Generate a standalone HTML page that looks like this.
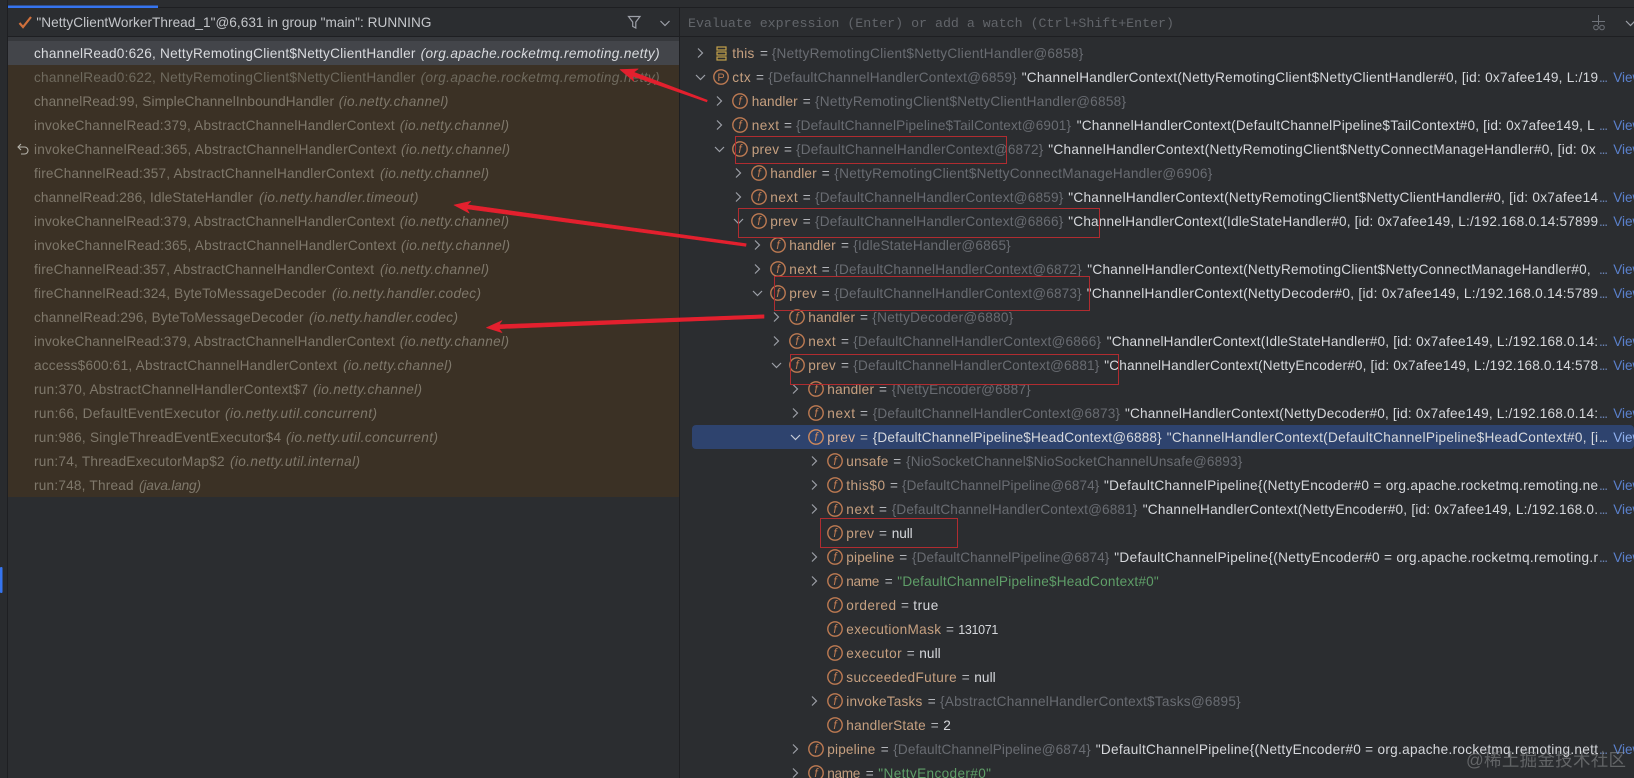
<!DOCTYPE html>
<html><head><meta charset="utf-8">
<style>
html,body{margin:0;padding:0;background:#2b2d30;width:1634px;height:778px;overflow:hidden}
svg{display:block;font-family:"Liberation Sans","Noto Sans CJK SC",sans-serif;font-size:13.6px;filter:blur(.35px)}
.t{fill:#7f786b}.i{fill:#7f786b;font-style:italic}
.w{fill:#d9dbdf}.wi{fill:#d9dbdf;font-style:italic}
.h{fill:#c4c6ca}
.n{fill:#c6a080}.e{fill:#b4b6bb}.g{fill:#696c72}.s{fill:#d6d8dc}.d{fill:#6a83b5}.v{fill:#5a80cc}.u{fill:#5f9e68}
.o{fill:none;stroke:#bd7a52;stroke-width:1.4}
.f{fill:#bd7a52;font-size:12px;text-anchor:middle;font-style:italic}
.c{fill:none;stroke:#9da0a8;stroke-width:1.2}
.b{fill:none;stroke:#b02c30;stroke-width:1}
.m{font-family:"Liberation Mono",monospace;fill:#62656a;font-size:13.3px}
.a{fill:#e3202e;stroke:#e3202e;stroke-width:.6;stroke-linejoin:round}
</style></head><body>
<svg width="1634" height="778" viewBox="0 0 1634 778" xmlns="http://www.w3.org/2000/svg">
<rect width="1634" height="778" fill="#2b2d30"/>
<rect x="0" y="0" width="7" height="778" fill="#292b2e"/>
<rect x="7" y="0" width="1" height="778" fill="#1e1f22"/>
<rect x="0" y="567" width="2.5" height="26" rx="1" fill="#3574f0"/>
<rect x="8" y="5.5" width="150" height="2.5" fill="#3574f0"/>
<rect x="158" y="7" width="1476" height="1" fill="#1e1f22"/>
<rect x="8" y="36" width="1626" height="1" fill="#1e1f22"/>
<rect x="8" y="37" width="671" height="4" fill="#36383c"/>
<rect x="8" y="41" width="671" height="24" fill="#43454a"/>
<rect x="8" y="65" width="671" height="432" fill="#3b3125"/>
<rect x="679" y="8" width="1" height="770" fill="#1e1f22"/>
<rect x="692" y="425" width="942" height="24" rx="4" fill="#2e436e"/>

<!-- left header -->
<path d="M19.5 23l3.5 4 8-10" fill="none" stroke="#d0703c" stroke-width="2.2"/>
<text x="36.4" y="27" class="h" textLength="395">"NettyClientWorkerThread_1"@6,631 in group "main": RUNNING</text>
<path d="M628.5 16.5h11.5l-4.2 5.6v5.900l-3.100-1.600v-4.300z" class="c"/>
<path d="M660.5 21l4.500 4.500 4.500-4.500" class="c"/>
<!-- right header -->
<text x="688" y="27" class="m" textLength="486">Evaluate expression (Enter) or add a watch (Ctrl+Shift+Enter)</text>
<path d="M1598.500 15v10M1592 21.500h13" fill="none" stroke="#6f737a"/>
<circle cx="1596" cy="27.500" r="2.300" fill="none" stroke="#6f737a"/><circle cx="1602" cy="27.500" r="2.300" fill="none" stroke="#6f737a"/>
<path d="M1626 21l4.500 4.500 4.500-4.500" class="c"/>

<!-- stack frames -->
<text x="34" y="58" class="w" textLength="381.4">channelRead0:626, NettyRemotingClient$NettyClientHandler</text><text x="420.6" y="58" class="wi" textLength="239">(org.apache.rocketmq.remoting.netty)</text>
<text x="34" y="82" class="t" textLength="381.4" style="fill:#6f6a5e">channelRead0:622, NettyRemotingClient$NettyClientHandler</text><text x="420.6" y="82" class="i" textLength="239" style="fill:#6f6a5e">(org.apache.rocketmq.remoting.netty)</text>
<text x="34" y="106" class="t" textLength="300">channelRead:99, SimpleChannelInboundHandler</text><text x="338.7" y="106" class="i" textLength="109.7">(io.netty.channel)</text>
<text x="34" y="130" class="t" textLength="360.6">invokeChannelRead:379, AbstractChannelHandlerContext</text><text x="399.8" y="130" class="i" textLength="109.2">(io.netty.channel)</text>
<path d="M18 147h6.500a3.500 3.500 0 0 1 0 7h-3.500M21 144l-3 3 3 3" fill="none" stroke="#b5b2aa" stroke-width="1.100"/>
<text x="34" y="154" class="t" textLength="362">invokeChannelRead:365, AbstractChannelHandlerContext</text><text x="401" y="154" class="i" textLength="109">(io.netty.channel)</text>
<text x="34" y="178" class="t" textLength="340">fireChannelRead:357, AbstractChannelHandlerContext</text><text x="380" y="178" class="i" textLength="109">(io.netty.channel)</text>
<text x="34" y="202" class="t" textLength="219">channelRead:286, IdleStateHandler</text><text x="259" y="202" class="i" textLength="159.500">(io.netty.handler.timeout)</text>
<text x="34" y="226" class="t" textLength="360.6">invokeChannelRead:379, AbstractChannelHandlerContext</text><text x="399.8" y="226" class="i" textLength="109.2">(io.netty.channel)</text>
<text x="34" y="250" class="t" textLength="362">invokeChannelRead:365, AbstractChannelHandlerContext</text><text x="401" y="250" class="i" textLength="109">(io.netty.channel)</text>
<text x="34" y="274" class="t" textLength="340">fireChannelRead:357, AbstractChannelHandlerContext</text><text x="380" y="274" class="i" textLength="109">(io.netty.channel)</text>
<text x="34" y="298" class="t" textLength="292">fireChannelRead:324, ByteToMessageDecoder</text><text x="332" y="298" class="i" textLength="149">(io.netty.handler.codec)</text>
<text x="34" y="322" class="t" textLength="269.500">channelRead:296, ByteToMessageDecoder</text><text x="309" y="322" class="i" textLength="149">(io.netty.handler.codec)</text>
<text x="34" y="346" class="t" textLength="360.6">invokeChannelRead:379, AbstractChannelHandlerContext</text><text x="399.8" y="346" class="i" textLength="109.2">(io.netty.channel)</text>
<text x="34" y="370" class="t" textLength="303">access$600:61, AbstractChannelHandlerContext</text><text x="343" y="370" class="i" textLength="109">(io.netty.channel)</text>
<text x="34" y="394" class="t" textLength="274">run:370, AbstractChannelHandlerContext$7</text><text x="313" y="394" class="i" textLength="109">(io.netty.channel)</text>
<text x="34" y="418" class="t" textLength="186">run:66, DefaultEventExecutor</text><text x="225" y="418" class="i" textLength="152">(io.netty.util.concurrent)</text>
<text x="34" y="442" class="t" textLength="247">run:986, SingleThreadEventExecutor$4</text><text x="286" y="442" class="i" textLength="152">(io.netty.util.concurrent)</text>
<text x="34" y="466" class="t" textLength="190.6">run:74, ThreadExecutorMap$2</text><text x="230" y="466" class="i" textLength="130">(io.netty.util.internal)</text>
<text x="34" y="490" class="t" textLength="99.6">run:748, Thread</text><text x="139" y="490" class="i" textLength="62">(java.lang)</text>

<!-- variables -->
<path d="M698 48.500l4.500 4.500-4.500 4.500" class="c"/>
<rect x="717" y="47" width="9" height="3" fill="none" stroke="#c4a24a" stroke-width="1.200"/><rect x="717" y="52" width="9" height="3" fill="none" stroke="#c4a24a" stroke-width="1.200"/><rect x="717" y="57" width="9" height="3" fill="none" stroke="#c4a24a" stroke-width="1.200"/>
<text x="732.3" y="58" class="n" textLength="22">this</text><text x="760" y="58" class="e">=</text><text x="771.7" y="58" class="g" textLength="311.6">{NettyRemotingClient$NettyClientHandler@6858}</text>

<path d="M696 75l4.500 4.500 4.500-4.500" class="c"/><circle cx="721" cy="77" r="7.200" class="o"/><text x="721" y="81" class="f" style="font-style:normal;font-size:11px">P</text>
<text x="732.3" y="82" class="n" textLength="18.4">ctx</text><text x="756" y="82" class="e">=</text><text x="768.3" y="82" class="g" textLength="248.4">{DefaultChannelHandlerContext@6859}</text><text x="1021.7" y="82" class="s" textLength="576.3">"ChannelHandlerContext(NettyRemotingClient$NettyClientHandler#0, [id: 0x7afee149, L:/19</text><text x="1599" y="82" class="d" textLength="9">...</text><text x="1613.300" y="82" class="v" textLength="29">View</text>

<path d="M717 96.500l4.500 4.500-4.500 4.500" class="c"/><circle cx="740" cy="101" r="7.200" class="o"/><text x="740" y="105" class="f">f</text>
<text x="751.7" y="106" class="n" textLength="46">handler</text><text x="802.7" y="106" class="e">=</text><text x="815" y="106" class="g" textLength="311">{NettyRemotingClient$NettyClientHandler@6858}</text>

<path d="M717 120.500l4.500 4.500-4.500 4.500" class="c"/><circle cx="740" cy="125" r="7.200" class="o"/><text x="740" y="129" class="f">f</text>
<text x="751.7" y="130" class="n" textLength="27.300">next</text><text x="784" y="130" class="e">=</text><text x="796" y="130" class="g" textLength="275">{DefaultChannelPipeline$TailContext@6901}</text><text x="1076.7" y="130" class="s" textLength="518">"ChannelHandlerContext(DefaultChannelPipeline$TailContext#0, [id: 0x7afee149, L</text><text x="1599" y="130" class="d" textLength="9">...</text><text x="1613.300" y="130" class="v" textLength="29">View</text>

<path d="M715 147l4.500 4.500 4.500-4.500" class="c"/><circle cx="740" cy="149" r="7.200" class="o"/><text x="740" y="153" class="f">f</text>
<text x="751.7" y="154" class="n" textLength="27.300">prev</text><text x="784" y="154" class="e">=</text><text x="796" y="154" class="g" textLength="247.300">{DefaultChannelHandlerContext@6872}</text><text x="1048.3" y="154" class="s" textLength="547.400">"ChannelHandlerContext(NettyRemotingClient$NettyConnectManageHandler#0, [id: 0x</text><text x="1599" y="154" class="d" textLength="9">...</text><text x="1613.300" y="154" class="v" textLength="29">View</text>

<path d="M736 168.500l4.500 4.500-4.500 4.500" class="c"/><circle cx="759" cy="173" r="7.200" class="o"/><text x="759" y="177" class="f">f</text>
<text x="770.3" y="178" class="n" textLength="46.400">handler</text><text x="821.7" y="178" class="e">=</text><text x="834.3" y="178" class="g" textLength="378">{NettyRemotingClient$NettyConnectManageHandler@6906}</text>

<path d="M736 192.500l4.500 4.500-4.500 4.500" class="c"/><circle cx="759" cy="197" r="7.200" class="o"/><text x="759" y="201" class="f">f</text>
<text x="770.3" y="202" class="n" textLength="27.400">next</text><text x="802.700" y="202" class="e">=</text><text x="815" y="202" class="g" textLength="248.300">{DefaultChannelHandlerContext@6859}</text><text x="1068.3" y="202" class="s" textLength="529.700">"ChannelHandlerContext(NettyRemotingClient$NettyClientHandler#0, [id: 0x7afee14</text><text x="1599" y="202" class="d" textLength="9">...</text><text x="1613.300" y="202" class="v" textLength="29">View</text>

<path d="M734 219l4.500 4.500 4.500-4.500" class="c"/><circle cx="759" cy="221" r="7.200" class="o"/><text x="759" y="225" class="f">f</text>
<text x="770.3" y="226" class="n" textLength="27.400">prev</text><text x="802.700" y="226" class="e">=</text><text x="815" y="226" class="g" textLength="248.300">{DefaultChannelHandlerContext@6866}</text><text x="1068.3" y="226" class="s" textLength="529.700">"ChannelHandlerContext(IdleStateHandler#0, [id: 0x7afee149, L:/192.168.0.14:57899</text><text x="1599" y="226" class="d" textLength="9">...</text><text x="1613.300" y="226" class="v" textLength="29">View</text>

<path d="M755 240.500l4.500 4.500-4.500 4.500" class="c"/><circle cx="778" cy="245" r="7.200" class="o"/><text x="778" y="249" class="f">f</text>
<text x="789.3" y="250" class="n" textLength="46.400">handler</text><text x="841" y="250" class="e">=</text><text x="853.3" y="250" class="g" textLength="157.400">{IdleStateHandler@6865}</text>

<path d="M755 264.500l4.500 4.500-4.500 4.500" class="c"/><circle cx="778" cy="269" r="7.200" class="o"/><text x="778" y="273" class="f">f</text>
<text x="789.3" y="274" class="n" textLength="27.400">next</text><text x="821.700" y="274" class="e">=</text><text x="834.3" y="274" class="g" textLength="247.400">{DefaultChannelHandlerContext@6872}</text><text x="1087.3" y="274" class="s" textLength="503.400">"ChannelHandlerContext(NettyRemotingClient$NettyConnectManageHandler#0,</text><text x="1599" y="274" class="d" textLength="9">...</text><text x="1613.300" y="274" class="v" textLength="29">View</text>

<path d="M753 291l4.500 4.500 4.500-4.500" class="c"/><circle cx="778" cy="293" r="7.200" class="o"/><text x="778" y="297" class="f">f</text>
<text x="789.3" y="298" class="n" textLength="27.400">prev</text><text x="821.700" y="298" class="e">=</text><text x="834.3" y="298" class="g" textLength="247.400">{DefaultChannelHandlerContext@6873}</text><text x="1086.700" y="298" class="s" textLength="511.300">"ChannelHandlerContext(NettyDecoder#0, [id: 0x7afee149, L:/192.168.0.14:5789</text><text x="1599" y="298" class="d" textLength="9">...</text><text x="1613.300" y="298" class="v" textLength="29">View</text>

<path d="M774 312.500l4.500 4.500-4.500 4.500" class="c"/><circle cx="797" cy="317" r="7.200" class="o"/><text x="797" y="321" class="f">f</text>
<text x="808.3" y="322" class="n" textLength="46.700">handler</text><text x="860" y="322" class="e">=</text><text x="872.3" y="322" class="g" textLength="141">{NettyDecoder@6880}</text>

<path d="M774 336.500l4.500 4.500-4.500 4.500" class="c"/><circle cx="797" cy="341" r="7.200" class="o"/><text x="797" y="345" class="f">f</text>
<text x="808.3" y="346" class="n" textLength="27.400">next</text><text x="841" y="346" class="e">=</text><text x="853.3" y="346" class="g" textLength="247.700">{DefaultChannelHandlerContext@6866}</text><text x="1106.700" y="346" class="s" textLength="491.300">"ChannelHandlerContext(IdleStateHandler#0, [id: 0x7afee149, L:/192.168.0.14:</text><text x="1599" y="346" class="d" textLength="9">...</text><text x="1613.300" y="346" class="v" textLength="29">View</text>

<path d="M772 363l4.500 4.500 4.500-4.500" class="c"/><circle cx="797" cy="365" r="7.200" class="o"/><text x="797" y="369" class="f">f</text>
<text x="808.3" y="370" class="n" textLength="27.400">prev</text><text x="841" y="370" class="e">=</text><text x="853.3" y="370" class="g" textLength="246">{DefaultChannelHandlerContext@6881}</text><text x="1104.3" y="370" class="s" textLength="493.700">"ChannelHandlerContext(NettyEncoder#0, [id: 0x7afee149, L:/192.168.0.14:578</text><text x="1599" y="370" class="d" textLength="9">...</text><text x="1613.300" y="370" class="v" textLength="29">View</text>

<path d="M793 384.500l4.500 4.500-4.500 4.500" class="c"/><circle cx="816" cy="389" r="7.200" class="o"/><text x="816" y="393" class="f">f</text>
<text x="827.3" y="394" class="n" textLength="46.700">handler</text><text x="879" y="394" class="e">=</text><text x="891.7" y="394" class="g" textLength="139">{NettyEncoder@6887}</text>

<path d="M793 408.500l4.500 4.500-4.500 4.500" class="c"/><circle cx="816" cy="413" r="7.200" class="o"/><text x="816" y="417" class="f">f</text>
<text x="827.3" y="418" class="n" textLength="27.700">next</text><text x="860" y="418" class="e">=</text><text x="872.7" y="418" class="g" textLength="247.300">{DefaultChannelHandlerContext@6873}</text><text x="1125" y="418" class="s" textLength="473">"ChannelHandlerContext(NettyDecoder#0, [id: 0x7afee149, L:/192.168.0.14:</text><text x="1599" y="418" class="d" textLength="9">...</text><text x="1613.300" y="418" class="v" textLength="29">View</text>

<path d="M791 435l4.500 4.500 4.500-4.500" class="c" style="stroke:#c8ccd6"/><circle cx="816" cy="437" r="7.200" class="o" style="stroke:#d08a5c"/><text x="816" y="441" class="f" style="fill:#d08a5c">f</text>
<text x="827.3" y="442" class="n" textLength="27.700" style="fill:#dab39a">prev</text><text x="860" y="442" class="e">=</text><text x="872.7" y="442" class="s" textLength="289">{DefaultChannelPipeline$HeadContext@6888}</text><text x="1166.7" y="442" class="s" textLength="431.300">"ChannelHandlerContext(DefaultChannelPipeline$HeadContext#0, [i</text><text x="1599" y="442" class="s" textLength="9">...</text><text x="1613.300" y="442" class="v" style="fill:#8fb0ee" textLength="29">View</text>

<path d="M812 456.500l4.500 4.500-4.500 4.500" class="c"/><circle cx="835" cy="461" r="7.200" class="o"/><text x="835" y="465" class="f">f</text>
<text x="846.3" y="466" class="n" textLength="42">unsafe</text><text x="893.300" y="466" class="e">=</text><text x="906" y="466" class="g" textLength="336.300">{NioSocketChannel$NioSocketChannelUnsafe@6893}</text>

<path d="M812 480.500l4.500 4.500-4.500 4.500" class="c"/><circle cx="835" cy="485" r="7.200" class="o"/><text x="835" y="489" class="f">f</text>
<text x="846.3" y="490" class="n" textLength="38.700">this$0</text><text x="890" y="490" class="e">=</text><text x="902" y="490" class="g" textLength="197.300">{DefaultChannelPipeline@6874}</text><text x="1104" y="490" class="s" textLength="494">"DefaultChannelPipeline{(NettyEncoder#0 = org.apache.rocketmq.remoting.ne</text><text x="1599" y="490" class="d" textLength="9">...</text><text x="1613.300" y="490" class="v" textLength="29">View</text>

<path d="M812 504.500l4.500 4.500-4.500 4.500" class="c"/><circle cx="835" cy="509" r="7.200" class="o"/><text x="835" y="513" class="f">f</text>
<text x="846.3" y="514" class="n" textLength="27.700">next</text><text x="879" y="514" class="e">=</text><text x="891.7" y="514" class="g" textLength="245.600">{DefaultChannelHandlerContext@6881}</text><text x="1142.700" y="514" class="s" textLength="455.300">"ChannelHandlerContext(NettyEncoder#0, [id: 0x7afee149, L:/192.168.0.</text><text x="1599" y="514" class="d" textLength="9">...</text><text x="1613.300" y="514" class="v" textLength="29">View</text>

<circle cx="835" cy="533" r="7.200" class="o"/><text x="835" y="537" class="f">f</text>
<text x="846.3" y="538" class="n" textLength="27.700">prev</text><text x="879" y="538" class="e">=</text><text x="891.7" y="538" class="s" textLength="21">null</text>

<path d="M812 552.500l4.500 4.500-4.500 4.500" class="c"/><circle cx="835" cy="557" r="7.200" class="o"/><text x="835" y="561" class="f">f</text>
<text x="846.3" y="562" class="n" textLength="48">pipeline</text><text x="899.300" y="562" class="e">=</text><text x="912" y="562" class="g" textLength="197.300">{DefaultChannelPipeline@6874}</text><text x="1114.3" y="562" class="s" textLength="483.700">"DefaultChannelPipeline{(NettyEncoder#0 = org.apache.rocketmq.remoting.r</text><text x="1599" y="562" class="d" textLength="9">...</text><text x="1613.300" y="562" class="v" textLength="29">View</text>

<path d="M812 576.500l4.500 4.500-4.500 4.500" class="c"/><circle cx="835" cy="581" r="7.200" class="o"/><text x="835" y="585" class="f">f</text>
<text x="846.3" y="586" class="n" textLength="33">name</text><text x="884.700" y="586" class="e">=</text><text x="897.3" y="586" class="u" textLength="261.400">"DefaultChannelPipeline$HeadContext#0"</text>

<circle cx="835" cy="605" r="7.200" class="o"/><text x="835" y="609" class="f">f</text>
<text x="846.3" y="610" class="n" textLength="49.700">ordered</text><text x="901" y="610" class="e">=</text><text x="913.3" y="610" class="s" textLength="25">true</text>

<circle cx="835" cy="629" r="7.200" class="o"/><text x="835" y="633" class="f">f</text>
<text x="846.3" y="634" class="n" textLength="94.700">executionMask</text><text x="946" y="634" class="e">=</text><text x="958.3" y="634" class="s" textLength="40" style="font-size:12.500px">131071</text>

<circle cx="835" cy="653" r="7.200" class="o"/><text x="835" y="657" class="f">f</text>
<text x="846.3" y="658" class="n" textLength="55.400">executor</text><text x="906.700" y="658" class="e">=</text><text x="919.3" y="658" class="s" textLength="21.400">null</text>

<circle cx="835" cy="677" r="7.200" class="o"/><text x="835" y="681" class="f">f</text>
<text x="846.3" y="682" class="n" textLength="110.400">succeededFuture</text><text x="961.700" y="682" class="e">=</text><text x="974.3" y="682" class="s" textLength="21.400">null</text>

<path d="M812 696.500l4.500 4.500-4.500 4.500" class="c"/><circle cx="835" cy="701" r="7.200" class="o"/><text x="835" y="705" class="f">f</text>
<text x="846.3" y="706" class="n" textLength="76">invokeTasks</text><text x="927.700" y="706" class="e">=</text><text x="940" y="706" class="g" textLength="300.700">{AbstractChannelHandlerContext$Tasks@6895}</text>

<circle cx="835" cy="725" r="7.200" class="o"/><text x="835" y="729" class="f">f</text>
<text x="846.3" y="730" class="n" textLength="79.400">handlerState</text><text x="930.700" y="730" class="e">=</text><text x="943.3" y="730" class="s" textLength="6.700">2</text>

<path d="M793 744.500l4.500 4.500-4.500 4.500" class="c"/><circle cx="816" cy="749" r="7.200" class="o"/><text x="816" y="753" class="f">f</text>
<text x="827.3" y="754" class="n" textLength="48">pipeline</text><text x="880.700" y="754" class="e">=</text><text x="893.3" y="754" class="g" textLength="197.400">{DefaultChannelPipeline@6874}</text><text x="1095.700" y="754" class="s" textLength="502.300">"DefaultChannelPipeline{(NettyEncoder#0 = org.apache.rocketmq.remoting.nett</text><text x="1599" y="754" class="d" textLength="9">...</text><text x="1613.300" y="754" class="v" textLength="29">View</text>

<path d="M793 768.500l4.500 4.500-4.500 4.500" class="c"/><circle cx="816" cy="773" r="7.200" class="o"/><text x="816" y="777" class="f">f</text>
<text x="827.3" y="778" class="n" textLength="33">name</text><text x="865.700" y="778" class="e">=</text><text x="878.3" y="778" class="u" textLength="112.700">"NettyEncoder#0"</text>

<!-- red boxes -->
<rect x="735.500" y="136.500" width="271" height="27" class="b"/>
<rect x="738.500" y="208.500" width="361" height="29" class="b"/>
<rect x="774.500" y="276.500" width="315" height="34" class="b"/>
<rect x="790.500" y="354.500" width="328" height="30" class="b"/>
<rect x="820.500" y="518.500" width="137" height="29" class="b"/>

<!-- arrows -->
<polygon class="a" points="707.300,100.100 633.700,72.200 638.200,68.900 620,69.500 633.800,81.100 632.300,76 706.700,101.900"/>
<polygon class="a" points="746.200,243.700 467.300,204.800 470.800,201.300 454,205 469.200,213.100 466.700,208.800 745.800,246.300"/>
<polygon class="a" points="764,314.800 499,324.700 502,320.600 486.500,327.700 502,332.600 499,328.700 764,318.200"/>

<!-- watermark -->
<text x="1466" y="766" style="font-size:17.500px;fill:#8f9194;fill-opacity:.55" textLength="160">@稀土掘金技术社区</text>
</svg>
</body></html>
